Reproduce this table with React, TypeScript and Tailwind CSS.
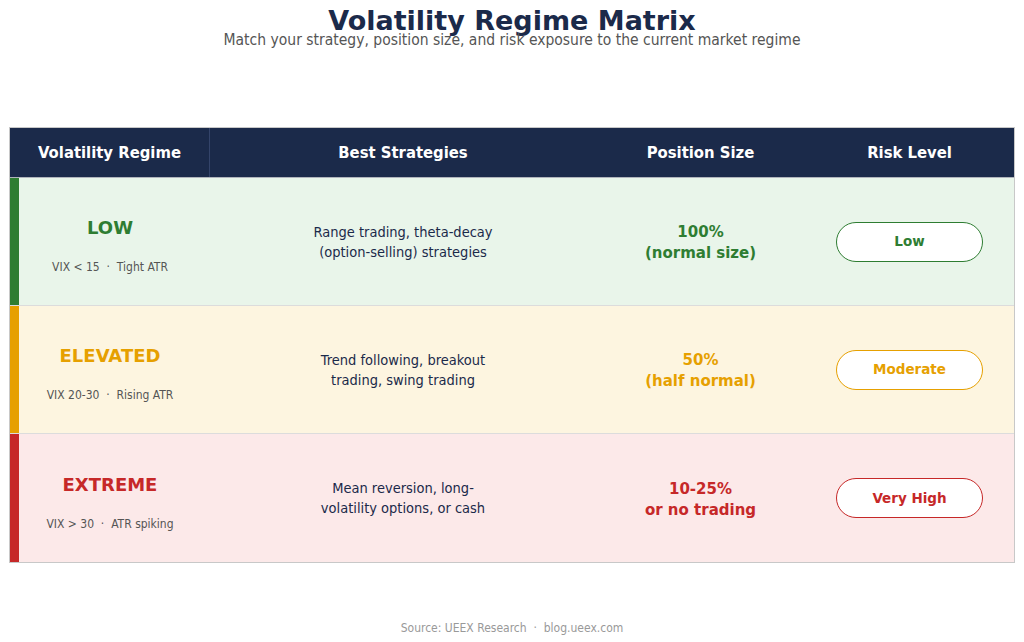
import React from "react";

const rows = [
  {
    name: "LOW",
    meta: "VIX < 15  ·  Tight ATR",
    strat: ["Range trading, theta-decay", "(option-selling) strategies"],
    size: ["100%", "(normal size)"],
    risk: "Low",
    stripe: "bg-[#2e7d32]",
    bg: "bg-[#e9f5ea]",
    text: "text-[#2e7d32]",
    border: "border-[#2e7d32]",
  },
  {
    name: "ELEVATED",
    meta: "VIX 20-30  ·  Rising ATR",
    strat: ["Trend following, breakout", "trading, swing trading"],
    size: ["50%", "(half normal)"],
    risk: "Moderate",
    stripe: "bg-[#e6a000]",
    bg: "bg-[#fdf5e0]",
    text: "text-[#e6a000]",
    border: "border-[#e6a000]",
  },
  {
    name: "EXTREME",
    meta: "VIX > 30  ·  ATR spiking",
    strat: ["Mean reversion, long-", "volatility options, or cash"],
    size: ["10-25%", "or no trading"],
    risk: "Very High",
    stripe: "bg-[#c62828]",
    bg: "bg-[#fce9e9]",
    text: "text-[#c62828]",
    border: "border-[#c62828]",
  },
];

const cond = "font-['DejaVu_Sans_Condensed','DejaVu_Sans',sans-serif]";

const App = () => {
  return (
    <div className="w-[1024px] h-[642px] bg-white flex flex-col items-center font-['DejaVu_Sans',sans-serif]">
      {/* title */}
      <h1 className="mt-[7px] text-[27px] leading-[27px] font-bold text-[#1b2a4a]">
        Volatility Regime Matrix
      </h1>
      <p className={`${cond} text-[15.5px] leading-[12px] text-[#555]`}>
        Match your strategy, position size, and risk exposure to the current market regime
      </p>

      {/* table */}
      <div className="mt-[81px] w-[1006px] border border-[#c8c8c8] flex flex-col">
        <div className={`h-[50px] bg-[#1b2a4a] flex text-white font-bold ${cond} text-[16.5px] border-b border-[#b0b4bc]`}>
          <div className="w-[200px] flex items-center justify-center pt-[1px] border-r border-[#34446a]">
            Volatility Regime
          </div>
          <div className="w-[386px] flex items-center justify-center pt-[1px]">Best Strategies</div>
          <div className="w-[209px] flex items-center justify-center pt-[1px]">Position Size</div>
          <div className="flex-1 flex items-center justify-center pt-[1px]">Risk Level</div>
        </div>

        {rows.map((r, i) => (
          <div
            key={r.name}
            className={`h-[128px] flex ${r.bg} ${i < 2 ? "border-b border-[#dcdcdc]" : ""}`}
          >
            <div className="relative w-[200px] flex flex-col items-center justify-center pt-[8px]">
              <div className={`absolute left-0 top-0 bottom-0 w-[9px] ${r.stripe}`} />
              <div className={`text-[18px] leading-[22px] font-bold ${r.text}`}>{r.name}</div>
              <div className={`mt-[21px] ${cond} text-[12px] leading-[14px] text-[#555] whitespace-pre`}>
                {r.meta}
              </div>
            </div>
            <div className={`w-[386px] flex flex-col items-center justify-center ${cond} text-[14.5px] leading-[20px] text-[#1b2a4a]`}>
              <span>{r.strat[0]}</span>
              <span>{r.strat[1]}</span>
            </div>
            <div className={`w-[209px] flex flex-col items-center justify-center pt-[3px] text-[15px] leading-[21px] font-bold ${r.text}`}>
              <span>{r.size[0]}</span>
              <span>{r.size[1]}</span>
            </div>
            <div className="flex-1 flex items-center justify-center">
              <div
                className={`w-[147px] h-[40px] rounded-[20px] bg-white border-[1.5px] ${r.border} flex items-center justify-center text-[13.5px] font-bold ${r.text}`}
              >
                {r.risk}
              </div>
            </div>
          </div>
        ))}
      </div>

      <div className={`mt-auto mb-[5px] ${cond} text-[12px] text-[#999] whitespace-pre`}>
        Source: UEEX Research  ·  blog.ueex.com
      </div>
    </div>
  );
};

export default App;
